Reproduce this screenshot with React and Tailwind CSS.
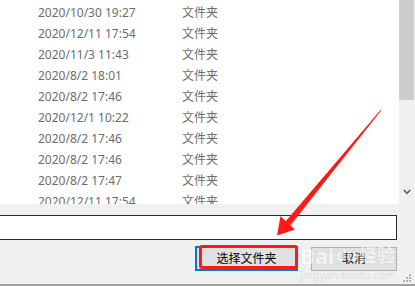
import React from 'react';

const rows = [
  '2020/10/30 19:27',
  '2020/12/11 17:54',
  '2020/11/3 11:43',
  '2020/8/2 18:01',
  '2020/8/2 17:46',
  '2020/12/1 10:22',
  '2020/8/2 17:46',
  '2020/8/2 17:46',
  '2020/8/2 17:47',
  '2020/12/11 17:54',
];

const uiFont = { fontFamily: '"Noto Sans", "Noto Sans CJK SC", sans-serif' };

export default function App() {
  return (
    <div
      className="relative w-[415px] h-[286px] overflow-hidden bg-white flex flex-col"
      style={uiFont}
    >
      {/* File list + scrollbar */}
      <div className="h-[204px] flex shrink-0">
        <div className="w-[399px] overflow-hidden bg-white pt-[2px]">
          {rows.map((d, i) => (
            <div key={i} className="h-[21px] flex items-center text-[12px] text-[#6d6d6d] leading-none">
              <span className="pl-[38px] w-[182px] shrink-0">{d}</span>
              <span>文件夹</span>
            </div>
          ))}
        </div>
        <div className="w-[16px] bg-[#f0f0f0] flex flex-col">
          <div className="w-[15px] h-[100px] bg-[#cdcdcd]" />
          <div className="flex-1" />
          <div className="h-[16px] flex items-start pl-[4px] pt-[1px]">
            <svg width="8" height="6" viewBox="0 0 8 6">
              <path d="M0.8 1 L4 4.3 L7.2 1" fill="none" stroke="#606060" strokeWidth="1.7" />
            </svg>
          </div>
        </div>
      </div>

      {/* Bottom panel */}
      <div className="flex-1 bg-[#f0f0f0] flex flex-col border-b-[2px] border-[#a0a0a0]">
        <div className="mt-[11px] -ml-[2px] w-[399px] h-[25px] bg-white border border-[#2b2b2b]" />
        <div className="mt-[6px] flex items-start">
          <div className="ml-[195px] w-[103px] h-[25px] border-2 border-[#0078d7] bg-[#e1e1e1] flex items-center justify-center text-[12px] text-black">
            选择文件夹
          </div>
          <div className="ml-[13px] mt-px w-[86px] h-[24px] border border-[#adadad] bg-[#e1e1e1] flex items-center justify-center text-[12px] text-black">
            取消
          </div>
        </div>
        <div className="flex-1 flex justify-end items-end pr-[4px] pb-[2px]">
          <div className="grid grid-cols-3 gap-[1px] w-[8px]">
            <span className="w-[2px] h-[2px]" />
            <span className="w-[2px] h-[2px]" />
            <span className="w-[2px] h-[2px] bg-[#b3b3b3]" />
            <span className="w-[2px] h-[2px]" />
            <span className="w-[2px] h-[2px] bg-[#b3b3b3]" />
            <span className="w-[2px] h-[2px] bg-[#b3b3b3]" />
            <span className="w-[2px] h-[2px] bg-[#b3b3b3]" />
            <span className="w-[2px] h-[2px] bg-[#b3b3b3]" />
            <span className="w-[2px] h-[2px] bg-[#b3b3b3]" />
          </div>
        </div>
      </div>

      {/* Watermark */}
      <div className="absolute left-[300px] top-[244px] flex flex-col items-start pointer-events-none select-none opacity-60">
        <div className="flex items-center gap-[2px] text-[22px] font-bold leading-none text-white [text-shadow:0_0_1px_#bcbcbc]">
          <span>Bai</span>
          <span className="text-[16px]">du</span>
          <span className="text-[18px]">经验</span>
        </div>
        <div className="text-[11px] leading-none mt-[3px] text-[#d6d6d6]">jingyan.baidu.com</div>
      </div>

      {/* Red annotation box */}
      <div className="absolute left-[199px] top-[245px] w-[99px] h-[24px] border-[3px] border-[#ff1a1a] rounded-[3px]" />

      {/* Red arrow */}
      <svg className="absolute left-0 top-0 pointer-events-none" width="415" height="286" viewBox="0 0 415 286">
        <polygon
          points="380.5,110 381.2,110.6 290.5,225.2 285.5,221.5"
          fill="#ff1a1a"
        />
        <polygon
          points="277,235.5 280.5,216 286.5,222 289,224 295,229.5"
          fill="#ff1a1a"
        />
      </svg>
    </div>
  );
}
